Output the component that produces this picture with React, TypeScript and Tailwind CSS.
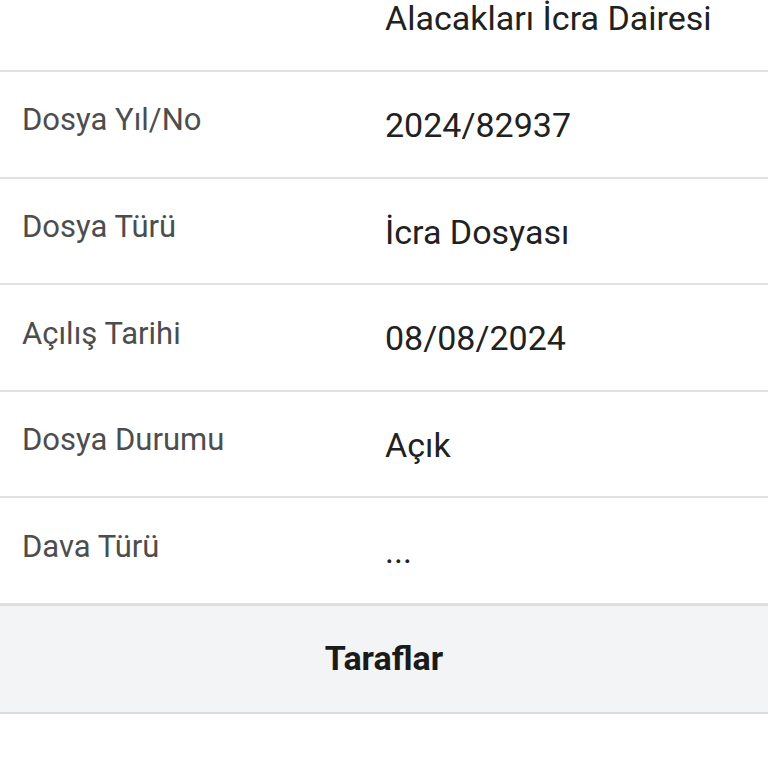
const rows = [
    { label: 'Birim Adı', value: 'İstanbul Anadolu Kamu\nAlacakları İcra Dairesi' },
    { label: 'Dosya Yıl/No', value: '2024/82937' },
    { label: 'Dosya Türü', value: 'İcra Dosyası' },
    { label: 'Açılış Tarihi', value: '08/08/2024' },
    { label: 'Dosya Durumu', value: 'Açık' },
    { label: 'Dava Türü', value: '...' },
];

export default function App() {
    return (
        <div className="h-[768px] overflow-hidden bg-white font-['Roboto',sans-serif]">
            {/* page is scrolled, first row only partly visible */}
            <div className="-mt-[85.6px]">
                {rows.map((row) => (
                    <div
                        key={row.label}
                        className="flex items-start border-b-2 border-[#e0e0e0]"
                    >
                        <div className="w-[385px] shrink-0 pl-[22px] pt-[25.4px] text-[31px] leading-[46px] text-[#4d4d4d]">
                            {row.label}
                        </div>
                        <div className="flex-1 whitespace-pre-line pt-[28px] pb-[25.6px] text-[34px] leading-[51px] text-[#212121]">
                            {row.value}
                        </div>
                    </div>
                ))}
            </div>

            {/* Section header */}
            <div className="flex h-[109px] items-center justify-center border-t border-b-2 border-[#dcdcdc] bg-[#f3f4f6]">
                <h2 className="text-[34px] font-bold text-[#1a1a1a]">Taraflar</h2>
            </div>

            <div className="h-[60px] bg-white" />
        </div>
    );
}
